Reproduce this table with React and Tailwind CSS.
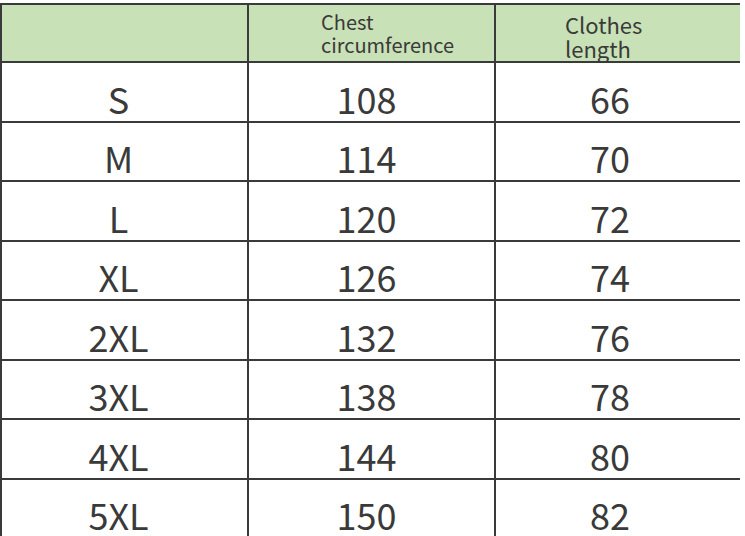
import React from 'react';

const rows = [
  { size: 'S', chest: 108, length: 66 },
  { size: 'M', chest: 114, length: 70 },
  { size: 'L', chest: 120, length: 72 },
  { size: 'XL', chest: 126, length: 74 },
  { size: '2XL', chest: 132, length: 76 },
  { size: '3XL', chest: 138, length: 78 },
  { size: '4XL', chest: 144, length: 80 },
  { size: '5XL', chest: 150, length: 82 },
];

const font = { fontFamily: '"Noto Sans CJK SC", "Noto Sans", sans-serif' };

const App = () => {
  return (
    <div className="w-[745px] h-[536px] overflow-hidden bg-white pt-[3px]" style={font}>
      <div className="w-[740px] border-l-2 border-t-2 border-[#3a3a3a] text-[#3a3a3a]">
        {/* header */}
        <div className="grid grid-cols-[247px_247px_244px] h-[58px] bg-[#c8e1b6] border-b-2 border-[#3a3a3a]">
          <div className="border-r-2 border-[#3a3a3a]" />
          <div className="border-r-2 border-[#3a3a3a] flex flex-col justify-center pl-[72px] text-[20px] leading-[23px]">
            <span>Chest</span>
            <span>circumference</span>
          </div>
          <div className="flex flex-col justify-center pl-[69px] pt-[5px] text-[22px] leading-[24px]">
            <span>Clothes</span>
            <span>length</span>
          </div>
        </div>

        {rows.map((row) => (
          <div
            key={row.size}
            className="grid grid-cols-[247px_247px_244px] h-[59.5px] border-b-2 border-[#3a3a3a] text-[36px] leading-none"
          >
            <div className="border-r-2 border-[#3a3a3a] flex items-center justify-center pt-3 pr-[12px]">{row.size}</div>
            <div className="border-r-2 border-[#3a3a3a] flex items-center justify-center pt-3 pr-[10px]">{row.chest}</div>
            <div className="flex items-center justify-center pt-3 pr-[16px]">{row.length}</div>
          </div>
        ))}
      </div>
    </div>
  );
};

export default App;
